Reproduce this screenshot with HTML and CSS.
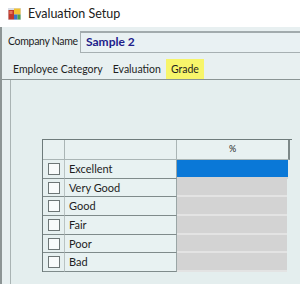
FILE: index.html
```html
<!DOCTYPE html>
<html>
<head>
<meta charset="utf-8">
<link rel="stylesheet" href="styles.css">
</head>
<body>
<div class="window">
  <div class="titlebar">
    <svg class="appicon" width="13" height="12" viewBox="0 0 13 12">
      <rect x="0" y="0" width="13" height="12" fill="#d8dde6"/>
      <rect x="0.5" y="2" width="5.5" height="9.5" fill="#c0392b"/>
      <rect x="6" y="0.5" width="6.5" height="6" fill="#f2c232"/>
      <rect x="6" y="6.5" width="3.5" height="5" fill="#3c78c8"/>
      <rect x="9.5" y="6.5" width="3" height="5" fill="#4da04a"/>
      <rect x="1.5" y="3" width="3" height="3" fill="#e8735a"/>
    </svg>
    <span class="title">Evaluation Setup</span>
  </div>
  <div class="client">
    <div class="company-row">
      <span class="label">Company Name</span>
      <div class="textbox">Sample 2</div>
    </div>
    <div class="tabs">
      <div class="tab">Employee Category</div>
      <div class="tab">Evaluation</div>
      <div class="tab active">Grade</div>
    </div>
    <div class="tabpage">
      <div class="grid">
        <div class="hdr corner"></div>
        <div class="hdr namehdr"></div>
        <div class="hdr pcthdr">%</div>

        <div class="rh"><span class="cb"></span></div>
        <div class="name">Excellent</div>
        <div class="pct selected"></div>

        <div class="rh"><span class="cb"></span></div>
        <div class="name">Very Good</div>
        <div class="pct"></div>

        <div class="rh"><span class="cb"></span></div>
        <div class="name">Good</div>
        <div class="pct"></div>

        <div class="rh"><span class="cb"></span></div>
        <div class="name">Fair</div>
        <div class="pct"></div>

        <div class="rh"><span class="cb"></span></div>
        <div class="name">Poor</div>
        <div class="pct"></div>

        <div class="rh"><span class="cb"></span></div>
        <div class="name">Bad</div>
        <div class="pct"></div>
      </div>
    </div>
  </div>
</div>
</body>
</html>
```

FILE: styles.css
```css
* { box-sizing: border-box; }
html, body { margin: 0; padding: 0; }
body {
  width: 300px;
  height: 284px;
  overflow: hidden;
  font-family: Lato, "Liberation Sans", sans-serif;
  font-size: 11px;
  color: #1e1e1e;
  background: #e8f0f1;
  white-space: nowrap;
}
.window {
  display: flex;
  flex-direction: column;
  height: 284px;
}
.titlebar {
  height: 27px;
  background: #ffffff;
  display: flex;
  align-items: center;
  padding-left: 8px;
  flex: none;
}
.appicon { margin-right: 7px; margin-top: 1px; }
.title {
  font-size: 12.5px;
  color: #202020;
}
.client {
  flex: 1;
  display: flex;
  flex-direction: column;
  border-left: 2px solid #8d9595;
  background: #e8f0f1;
}
.company-row {
  display: flex;
  align-items: center;
  height: 28px;
  padding-left: 6px;
  flex: none;
}
.label {
  width: 72px;
  flex: none;
  font-size: 10.5px;
  letter-spacing: -0.3px;
}
.textbox {
  flex: 1;
  height: 22px;
  margin-top: 1px;
  border: 1px solid #a7b0b2;
  border-top: 2px solid #a2abad;
  border-right: none;
  background: #e9f1f3;
  padding-left: 5px;
  font-weight: bold;
  font-size: 12px;
  color: #20208a;
  line-height: 18px;
}
.tabs {
  display: flex;
  height: 25px;
  padding-left: 6px;
  padding-top: 4px;
  flex: none;
  border-bottom: 1px solid #8a9494;
  font-size: 10.5px;
}
.tab {
  padding: 0 5px;
  line-height: 20px;
  height: 20px;
  color: #1e1e1e;
}
.tab.active {
  background: #f7f56a;
  padding: 0 5px;
}
.tabpage {
  flex: 1;
  margin-left: 8px;
  border-left: 1px solid #a9b3b3;
  background: #e4eeee;
  padding-top: 59px;
  padding-left: 31px;
}
.grid {
  display: grid;
  grid-template-columns: 22px 112px 113px;
  grid-template-rows: 20px repeat(6, 18.7px);
  width: 250px;
  border-left: 1px solid #6e7b7b;
  border-top: 1px solid #6e7b7b;
}
.hdr {
  background: #e8f1f1;
  border-bottom: 1px solid #aab5b5;
  border-right: 1px solid #aab5b5;
}
.pcthdr {
  text-align: center;
  font-size: 9px;
  line-height: 18px;
  border-right: 2px solid #7d8888;
}
.rh {
  border-bottom: 1px solid #7f8b8b;
  border-right: 1px solid #b9c3c3;
  background: #e6f0f0;
  display: flex;
  align-items: center;
  justify-content: center;
}
.cb {
  width: 12px;
  height: 12px;
  border: 1px solid #6d7676;
  background: #f8fbfb;
  display: block;
}
.name {
  border-bottom: 1px solid #7f8b8b;
  border-right: 1px solid #9aa6a6;
  background: #e8f2f2;
  padding-left: 4px;
  line-height: 17px;
}
.pct {
  background: #d3d3d3;
  border-bottom: 2px solid #e3e3e3;
  margin-right: 3px;
}
.pct.selected {
  background: #0a78d7;
  border-bottom: 2px solid #d3d3d3;
  margin-right: 2px;
}
```
